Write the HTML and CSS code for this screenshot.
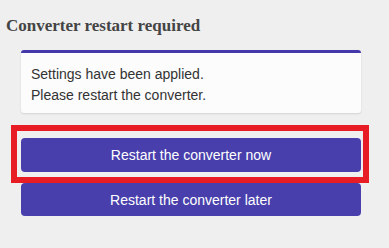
FILE: index.html
```html
<!DOCTYPE html>
<html>
<head>
<meta charset="utf-8">
<link rel="stylesheet" href="styles.css">
</head>
<body>
<h3 class="title">Converter restart required</h3>
<div class="content">
  <div class="card">
    <p>Settings have been applied.<br>Please restart the converter.</p>
  </div>
  <div class="actions">
    <div class="highlight-wrap">
      <button class="btn">Restart the converter now</button>
      <span class="highlight"></span>
    </div>
    <button class="btn">Restart the converter later</button>
  </div>
</div>
</body>
</html>
```
FILE: styles.css
```css
html, body {
  margin: 0;
  padding: 0;
  background: #efefef;
}
body {
  width: 389px;
  height: 248px;
  overflow: hidden;
}
.title {
  margin: 0;
  padding: 16px 0 0 6px;
  font-family: "Liberation Serif", "Times New Roman", serif;
  font-weight: bold;
  font-size: 17px;
  line-height: 19px;
  color: #444444;
}
.content {
  width: 340px;
  margin: 15px 0 0 21px;
}
.card {
  background: #fcfcfc;
  border-top: 3px solid #4438aa;
  border-radius: 3px;
  box-shadow: 0 1px 2px rgba(0, 0, 0, 0.12);
  padding: 11px 10px 7px;
}
.card p {
  margin: 0;
  font-family: "Liberation Sans", Arial, sans-serif;
  font-size: 14px;
  line-height: 21px;
  color: #333333;
}
.actions {
  margin-top: 25px;
  display: flex;
  flex-direction: column;
  gap: 11px;
}
.highlight-wrap {
  position: relative;
}
.btn {
  display: block;
  width: 100%;
  height: 34px;
  border: none;
  border-radius: 4px;
  background: #483fac;
  color: #ffffff;
  font-family: "Liberation Sans", Arial, sans-serif;
  font-size: 14px;
  padding: 0;
  margin: 0;
}
.actions > .btn {
  height: 33px;
}
.highlight {
  position: absolute;
  left: -10px;
  top: -13px;
  right: -8px;
  bottom: -11px;
  border: 6px solid #e81c24;
  pointer-events: none;
}
```
